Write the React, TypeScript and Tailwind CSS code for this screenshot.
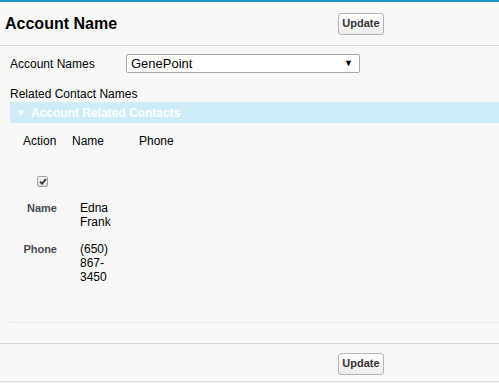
import React from "react";

function UpdateButton() {
  return (
    <button className="h-[22px] w-[46px] rounded-[3px] border border-[#b5b5b5] bg-gradient-to-b from-white to-[#ededed] text-[11px] font-bold text-[#333] leading-none">
      Update
    </button>
  );
}

export default function App() {
  return (
    <div className="w-[499px] h-[383px] overflow-hidden bg-[#f8f8f8] text-black font-['Liberation_Sans',Arial,sans-serif] border-t-2 border-[#1797c0]">
      {/* page header */}
      <div className="flex items-center h-[44px] pl-[5px] border-b border-[#dbdbdb]">
        <h1 className="w-[333px] text-[16px] font-bold leading-none">Account Name</h1>
        <UpdateButton />
      </div>

      <div className="pl-[10px] border-t border-white">
        <div className="flex items-center pt-[7px] text-[12px]">
          <label className="w-[116px]">Account Names</label>
          <div className="flex items-center justify-between w-[234px] h-[19px] bg-white border border-[#a9a9a9] rounded-[2px] pl-[4px] pr-[6px] text-[13px]">
            <span>GenePoint</span>
            <span className="text-[9px] leading-none">▼</span>
          </div>
        </div>

        <p className="mt-[14px] text-[12px] leading-[14px]">Related Contact Names</p>

        <div className="flex items-center h-[21px] mt-[1px] pl-[6px] bg-[#cfedf8] text-white text-[12px] font-bold">
          <span className="text-[10px] mr-[5px]">▼</span>
          Account Related Contacts
        </div>

        <div className="flex mt-[11px] pl-[13px] text-[12px] leading-[14px]">
          <span className="w-[49px]">Action</span>
          <span className="w-[67px]">Name</span>
          <span>Phone</span>
        </div>

        <div className="pl-[27px] mt-[28px]">
          <span className="flex items-center justify-center w-[11px] h-[11px] rounded-[2px] border border-[#a0a0a0] bg-gradient-to-b from-[#f4f4f4] to-[#dcdcdc]">
            <svg width="8" height="7" viewBox="0 0 8 7">
              <path d="M1 3.6 L3 5.6 L7 1" fill="none" stroke="#333" strokeWidth="1.8" />
            </svg>
          </span>
        </div>

        <div className="flex mt-[14px] leading-[14px]">
          <span className="w-[47px] text-right text-[11px] font-bold text-[#4a4a56]">Name</span>
          <span className="ml-[23px] w-[34px] text-[12px]">Edna Frank</span>
        </div>

        <div className="flex mt-[13px] leading-[14px]">
          <span className="w-[47px] text-right text-[11px] font-bold text-[#4a4a56]">Phone</span>
          <span className="ml-[23px] w-[34px] text-[12px]">(650) 867-3450</span>
        </div>

        <div className="mt-[38px] border-b border-[#e8e8e8]" />
      </div>

      <div className="mt-[20px] border-t border-[#d8d8d8] pt-[6px] pb-[6px] pl-[338px] border-b">
        <UpdateButton />
      </div>
    </div>
  );
}
